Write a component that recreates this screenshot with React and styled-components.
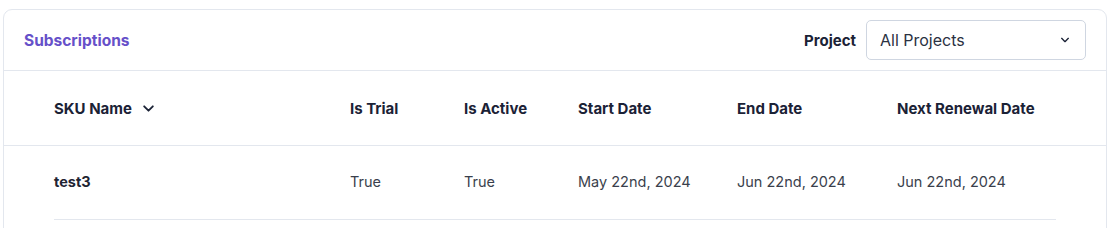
import styled, { createGlobalStyle } from "styled-components";

const GlobalStyle = createGlobalStyle`
  body {
    margin: 0;
    background: #ffffff;
    font-family: Inter, "Noto Sans", sans-serif;
    color: #1b2236;
  }
`;

const Page = styled.div`
  height: 228px;
  overflow: hidden;
  padding: 9px 7px 0 3px;
  box-sizing: border-box;
`;

const Card = styled.div`
  border: 1px solid #e3e7ee;
  border-radius: 9px;
  background: #fff;
  min-height: 260px;
`;

const CardHeader = styled.div`
  display: flex;
  align-items: center;
  justify-content: space-between;
  height: 60px;
  padding: 0 20px 0 20px;
  border-bottom: 1px solid #e3e7ee;
`;

const Title = styled.div`
  font-size: 15.5px;
  font-weight: 700;
  color: #6650c9;
`;

const Filter = styled.div`
  display: flex;
  align-items: center;
  gap: 10px;
`;

const FilterLabel = styled.span`
  font-size: 15px;
  font-weight: 700;
  color: #1b2236;
`;

const Select = styled.div`
  width: 220px;
  height: 40px;
  box-sizing: border-box;
  border: 1px solid #cfd6e1;
  border-radius: 5px;
  display: flex;
  align-items: center;
  justify-content: space-between;
  padding: 0 15px 0 13px;
  font-size: 16px;
  color: #2a3142;
`;

const columns = "296px 114px 114px 159px 160px 1fr";

const HeadRow = styled.div`
  display: grid;
  grid-template-columns: ${columns};
  align-items: center;
  height: 74px;
  padding: 0 50px;
  border-bottom: 1px solid #e3e7ee;
`;

const HeadCell = styled.div`
  display: flex;
  align-items: center;
  gap: 10px;
  font-size: 15px;
  font-weight: 700;
  color: #1b2236;
`;

const Body = styled.div`
  padding: 0 50px;
`;

const Row = styled.div`
  display: grid;
  grid-template-columns: ${columns};
  align-items: center;
  height: 74px;
  padding-bottom: 2px;
  box-sizing: border-box;
  border-bottom: 1px solid #e3e7ee;
`;

const Cell = styled.div`
  font-size: 14.5px;
  font-weight: ${(p) => (p.$strong ? 700 : 400)};
  color: ${(p) => (p.$strong ? "#1f2433" : "#3a3f4c")};
`;

const Chevron = ({ size = 12, stroke = 2 }) => (
  <svg width={size} height={size} viewBox="0 0 12 12" fill="none">
    <path
      d="M2 4l4 4 4-4"
      stroke="#1b2236"
      strokeWidth={stroke}
      strokeLinecap="round"
      strokeLinejoin="round"
    />
  </svg>
);

const headers = ["Is Trial", "Is Active", "Start Date", "End Date", "Next Renewal Date"];

const subscriptions = [
  {
    sku: "test3",
    isTrial: "True",
    isActive: "True",
    startDate: "May 22nd, 2024",
    endDate: "Jun 22nd, 2024",
    renewalDate: "Jun 22nd, 2024",
  },
];

export default function App() {
  return (
    <>
      <GlobalStyle />
      <Page>
        <Card>
          <CardHeader>
            <Title>Subscriptions</Title>
            <Filter>
              <FilterLabel>Project</FilterLabel>
              <Select>
                All Projects
                <Chevron size={10} stroke={1.6} />
              </Select>
            </Filter>
          </CardHeader>
          <HeadRow>
            <HeadCell>
              SKU Name <Chevron size={13} stroke={1.7} />
            </HeadCell>
            {headers.map((h) => (
              <HeadCell key={h}>{h}</HeadCell>
            ))}
          </HeadRow>
          <Body>
            {subscriptions.map((s) => (
              <Row key={s.sku}>
                <Cell $strong>{s.sku}</Cell>
                <Cell>{s.isTrial}</Cell>
                <Cell>{s.isActive}</Cell>
                <Cell>{s.startDate}</Cell>
                <Cell>{s.endDate}</Cell>
                <Cell>{s.renewalDate}</Cell>
              </Row>
            ))}
          </Body>
        </Card>
      </Page>
    </>
  );
}
